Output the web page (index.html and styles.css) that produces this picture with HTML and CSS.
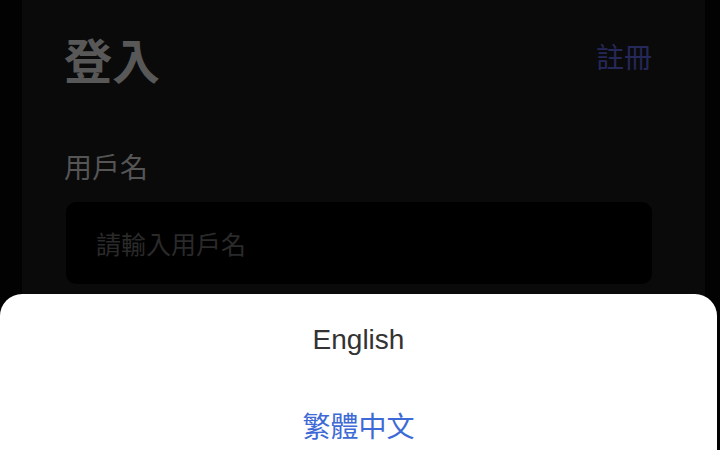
FILE: index.html
```html
<!DOCTYPE html>
<html lang="zh-Hant">
<head>
    <meta charset="UTF-8">
    <meta name="viewport" content="width=device-width, initial-scale=1.0">
    <title>登入</title>
    <link rel="stylesheet" href="styles.css">
</head>
<body>

<div class="page">
    <div class="header">
        <h1>登入</h1>
        <a class="register" href="#">註冊</a>
    </div>

    <form class="login-form">
        <label for="username">用戶名</label>
        <input type="text" id="username" placeholder="請輸入用戶名">
    </form>
</div>

<div class="sheet">
    <div class="sheet-item">English</div>
    <div class="sheet-item active">繁體中文</div>
</div>

</body>
</html>
```

FILE: styles.css
```css
html, body {
    height: 100%;
}
body {
    margin: 0;
    padding: 0;
    background-color: #020202;
    font-family: "Noto Sans CJK TC", "Liberation Sans", sans-serif;
    overflow: hidden;
}
.page {
    box-sizing: border-box;
    height: 100%;
    margin: 0 15px 0 22px;
    padding: 22px 53px 0 42px;
    background-color: #0a0a0a;
}
.header {
    display: flex;
    justify-content: space-between;
    align-items: center;
}
.header h1 {
    margin: 0;
    font-size: 48px;
    line-height: 72px;
    font-weight: bold;
    color: #585858;
}
.register {
    font-size: 28px;
    line-height: 40px;
    color: #26285a;
    text-decoration: none;
    margin-top: -4px;
}
.login-form {
    margin-top: 52px;
}
.login-form label {
    display: block;
    font-size: 28px;
    line-height: 40px;
    color: #555;
}
.login-form input {
    display: block;
    box-sizing: border-box;
    width: calc(100% - 2px);
    height: 82px;
    margin: 16px 0 0 2px;
    padding: 0 30px;
    border: none;
    border-radius: 10px;
    background-color: #000;
    font-family: inherit;
    font-size: 25px;
    color: #444;
    outline: none;
}
.login-form input::placeholder {
    color: #2a2a2a;
}
.sheet {
    position: fixed;
    left: 0;
    right: 3px;
    top: 294px;
    bottom: 0;
    padding-top: 2px;
    background-color: #fff;
    border-radius: 22px 22px 0 0;
}
.sheet-item {
    height: 88px;
    line-height: 88px;
    text-align: center;
    font-family: "Liberation Sans", "Noto Sans CJK TC", sans-serif;
    font-size: 28px;
    color: #333;
}
.sheet-item.active {
    color: #3e6ad6;
}
```
